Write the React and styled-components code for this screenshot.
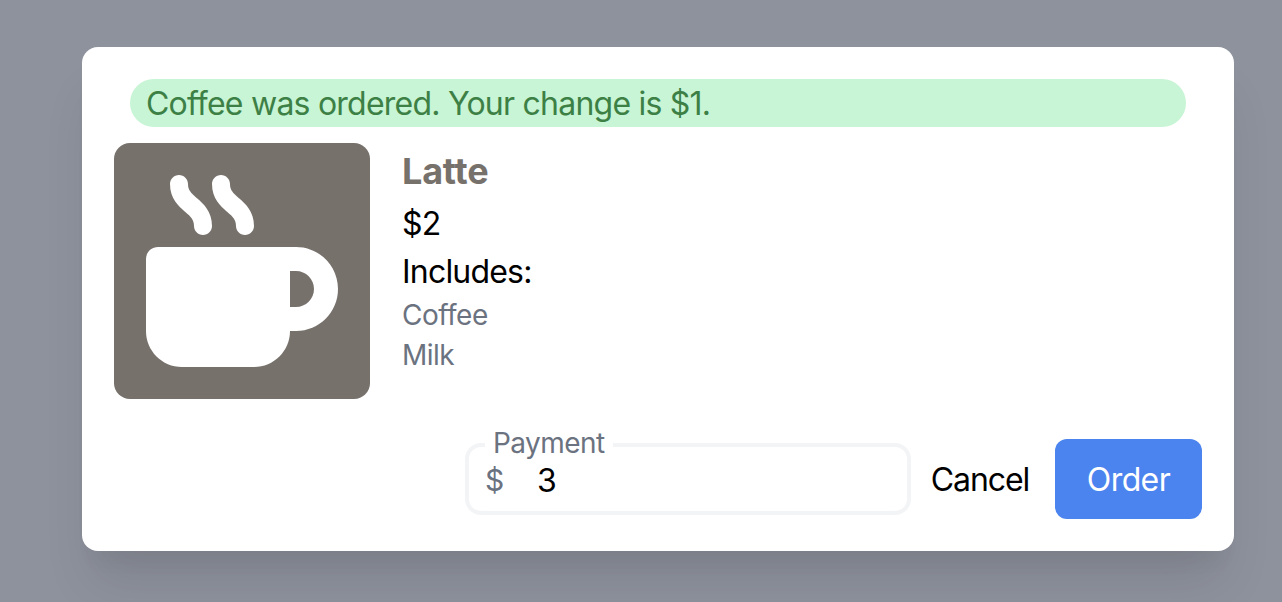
import React, { useState } from "react";
import styled, { createGlobalStyle } from "styled-components";
import { FaMugHot } from "react-icons/fa6";

const GlobalStyle = createGlobalStyle`
  *, *::before, *::after { box-sizing: border-box; }
  body {
    margin: 0;
    background: #8e929d;
    overflow: hidden;
    font-family: Inter, "Liberation Sans", sans-serif;
    font-size: 32px;
    font-weight: 440;
    line-height: 48px;
    font-variant-ligatures: none;
    color: #000;
  }
`;

const Overlay = styled.div`
  height: 602px;
  padding: 47px 48px 0 82px;
`;

const Dialog = styled.section`
  width: 1152px;
  height: 504px;
  padding: 32px;
  border-radius: 16px;
  background: #fff;
  box-shadow: 0 40px 50px -10px rgba(0, 0, 0, 0.1), 0 20px 20px -10px rgba(0, 0, 0, 0.04);
`;

const Alert = styled.div`
  height: 48px;
  margin: 0 16px 16px;
  padding: 1px 16px 0;
  border-radius: 24px;
  background: #c8f5d5;
  color: #3d8045;
  letter-spacing: -0.77px;
  white-space: nowrap;
`;

const Product = styled.div`
  display: flex;
  gap: 32px;
`;

const Thumbnail = styled.div`
  width: 256px;
  height: 256px;
  padding: 32px;
  border-radius: 16px;
  background: #77716c;
  color: #fff;

  svg {
    display: block;
    width: 192px;
    height: 192px;
  }
`;

const Details = styled.div`
  display: flex;
  flex-direction: column;
  align-items: flex-start;
`;

const Name = styled.h2`
  margin: 0;
  font-size: 36px;
  line-height: 57px;
  font-weight: 680;
  letter-spacing: -0.2px;
  color: #77716c;
`;

const Line = styled.div`
  letter-spacing: -0.8px;
`;

const Ingredients = styled.ul`
  margin: -1px 0 0;
  padding: 0;
  list-style: none;
`;

const Ingredient = styled.li`
  font-size: 28px;
  line-height: 40px;
  letter-spacing: -0.5px;
  color: #6b7280;
`;

const Actions = styled.div`
  display: flex;
  justify-content: flex-end;
  align-items: flex-start;
  margin-top: 26px;
`;

const Field = styled.fieldset`
  width: 446px;
  height: 90px;
  min-width: 0;
  margin: 0;
  padding: 0 16px;
  border: 4px solid #f3f4f6;
  border-radius: 16px;
`;

const Legend = styled.legend`
  width: 128px;
  height: 40px;
  padding: 0 8px;
  font-size: 28px;
  line-height: 37px;
  letter-spacing: -0.55px;
  color: #6b7280;
`;

const Amount = styled.div`
  display: flex;
  height: 30px;
  align-items: center;
`;

const Currency = styled.span`
  width: 52px;
  font-size: 30px;
  color: #6b7280;
`;

const Input = styled.input`
  width: 300px;
  height: 32px;
  padding: 0;
  border: 0;
  outline: 0;
  background: transparent;
  font: inherit;
  line-height: 32px;
  color: #000;
`;

const Button = styled.button`
  height: 80px;
  margin: 14px 0 0;
  padding: 2px ${(p) => (p.$primary ? "0" : "6px")} 0 0;
  border: 0;
  border-radius: 12px;
  font: inherit;
  letter-spacing: ${(p) => (p.$primary ? "-0.6px" : "-1.1px")};
  width: ${(p) => (p.$primary ? "147px" : "144px")};
  background: ${(p) => (p.$primary ? "#4b84ee" : "transparent")};
  color: ${(p) => (p.$primary ? "#fff" : "#000")};
`;

export default function App() {
  const [amount, setAmount] = useState("3");

  return (
    <>
      <GlobalStyle />
      <Overlay>
        <Dialog role="dialog">
          <Alert><span>Coffee was ordered. Your change is $1.</span></Alert>
          <Product>
            <Thumbnail><FaMugHot /></Thumbnail>
            <Details>
              <Name>Latte</Name>
              <Line>$2</Line>
              <Line>Includes:</Line>
              <Ingredients>
                <Ingredient>Coffee</Ingredient>
                <Ingredient>Milk</Ingredient>
              </Ingredients>
            </Details>
          </Product>
          <Actions>
            <Field>
              <Legend>Payment</Legend>
              <Amount>
                <Currency>$</Currency>
                <Input value={amount} onChange={(e) => setAmount(e.target.value)} />
              </Amount>
            </Field>
            <Button>Cancel</Button>
            <Button $primary>Order</Button>
          </Actions>
        </Dialog>
      </Overlay>
    </>
  );
}
